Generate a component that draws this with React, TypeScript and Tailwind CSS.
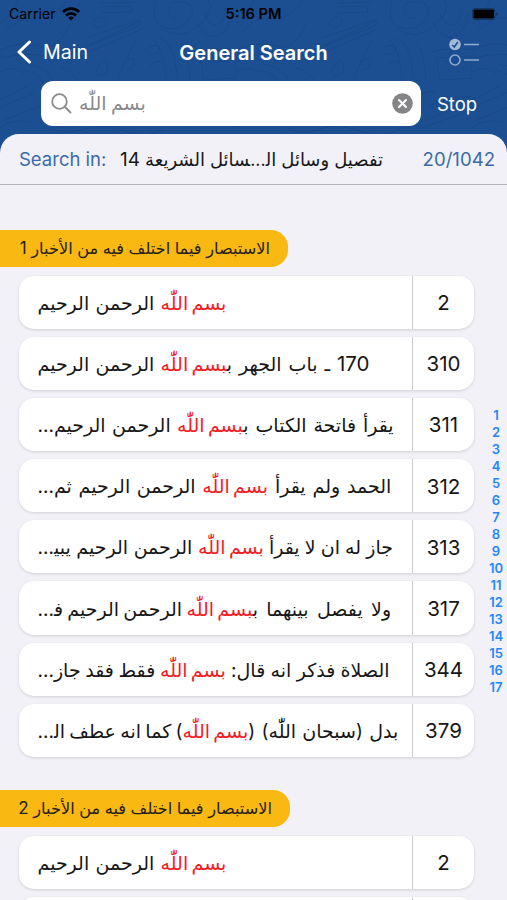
type Row = { page: string; number?: string; before?: string; after: string; beforeGap?: string; afterGap?: string }

const MATCH = "بسم اللّٰه"

const sections: { title: string; number: string; width: string; spacing: string; rows: Row[] }[] = [
  {
    title: "الاستبصار فيما اختلف فيه من الأخبار",
    number: "1",
    width: "w-[288px]",
    spacing: "mt-[45px]",
    rows: [
      { page: "2", after: " الرحمن الرحيم", afterGap: "[word-spacing:1px]" },
      {
        page: "310",
        number: "170",
        before: " ـ باب الجهر ب",
        after: " الرحمن الرحيم",
        beforeGap: "[word-spacing:1.6px]",
        afterGap: "[word-spacing:1px]",
      },
      {
        page: "311",
        before: "يقرأ فاتحة الكتاب ب",
        after: " الرحمن الرحيم...",
        beforeGap: "[word-spacing:1.6px]",
        afterGap: "[word-spacing:1px]",
      },
      {
        page: "312",
        before: "الحمد ولم يقرأ ",
        after: " الرحمن الرحيم ثم...",
        beforeGap: "[word-spacing:1.6px]",
        afterGap: "[word-spacing:1.3px]",
      },
      {
        page: "313",
        before: "جاز له ان لا يقرأ ",
        after: " الرحمن الرحيم يبي‍...",
        beforeGap: "[word-spacing:-0.2px]",
        afterGap: "[word-spacing:0.3px]",
      },
      {
        page: "317",
        before: "ولا يفصل بينهما ب",
        after: " الرحمن الرحيم ف‍...",
        beforeGap: "[word-spacing:3px]",
        afterGap: "[word-spacing:-1px]",
      },
      { page: "344", before: "الصلاة فذكر انه قال: ", after: " فقط فقد جاز...", afterGap: "[word-spacing:-0.7px]" },
      {
        page: "379",
        before: "بدل (سبحان اللّٰه) (",
        after: ") كما انه عطف ال‍...",
        beforeGap: "[word-spacing:1px]",
        afterGap: "[word-spacing:-1px]",
      },
    ],
  },
  {
    title: "الاستبصار فيما اختلف فيه من الأخبار",
    number: "2",
    width: "w-[290px]",
    spacing: "mt-[33px]",
    rows: [{ page: "2", after: " الرحمن الرحيم", afterGap: "[word-spacing:1px]" }],
  },
]

const indexNumbers = Array.from({ length: 17 }, (_, i) => i + 1)

function HeaderPattern() {
  return (
    <svg className="absolute inset-0 h-full w-full" aria-hidden="true">
      <defs>
        <pattern id="doodles" width="236" height="160" patternUnits="userSpaceOnUse">
          <g fill="none" stroke="#123f7a" strokeOpacity="0.45" strokeWidth="1">
            <path d="M0 50q22-10 40-4t30-22M0 58q30-6 44-2M4 34q14-18 32-16t30-16M0 24q12-8 18-24" />
            <path d="M62 58l78-37M66 62l76-33M86 38l52-18q5 2 0 6l-50 20" />
            <path d="M94 20q10-6 12 0t-8 8q-6-2-4-8M103 7l28-1 1 6-32 1M100 3l36-1" />
            <path d="M156 0q-6 24 10 28t24-10-8-16-14 8 10 8M160 28q20 14 38-2t10-26" />
            <path d="M196 22q10 18 22 14t14-24M204 14q6 14 14 10t8-18" />
            <path d="M146 50q8-8 14-2-2 8-12 6M150 66q8-8 12-2M98 66q10-10 10 0t-10 10q-4-4 0-10M126 62q8-8 8 0t-8 8" />
            <path d="M160 38q10 4 14 18l4 24M154 40q10 10 12 38M136 40q-14 26-18 40M180 44q8 4 10 36" />
            <path d="M196 52q20-6 40-2M200 58l36-2v22l-32 2zM208 62l22-1" />
            <path d="M26 64q20 2 28 18M22 70q16 2 22 14M60 68q8 0 18 12M0 72q14-8 24 2" />
            <path d="M0 100l28-14M0 108l36-16M4 120l36-14M0 128q10-10 30-6M190 120l46-18M186 128l50-18M192 106q20-8 44-10" />
            <path d="M50 129q18 6 34 0t40 2 40-2M180 98q10-8 20-6" />
          </g>
        </pattern>
      </defs>
      <rect width="100%" height="100%" fill="url(#doodles)" />
    </svg>
  )
}

function StatusBar() {
  return (
    <div className="relative flex h-7 items-center justify-between px-[9px] text-black">
      <div className="flex flex-1 items-center gap-1.5">
        <span className="text-[14px] leading-none tracking-[0.1px]">Carrier</span>
        <svg width="18" height="14" viewBox="0 0 18 14" fill="none" stroke="currentColor" strokeWidth="2.8">
          <path d="M1 4.9a11.4 11.4 0 0 1 16 0" />
          <path d="M4 8.4a7 7 0 0 1 10 0" />
          <path d="M9 13.4 6.200 10.800a4 4 0 0 1 5.600 0z" fill="currentColor" stroke="none" />
        </svg>
      </div>
      <span className="text-[14.600px] leading-none font-semibold">5:16 PM</span>
      <div className="flex flex-1 justify-end">
        <svg width="26" height="12" viewBox="0 0 26 12">
          <rect x="0.5" y="0.5" width="22.5" height="11" rx="2.5" fill="none" stroke="#000" strokeOpacity="0.3" />
          <rect x="1.500" y="1.500" width="20.5" height="9" rx="1" />
          <path d="M24.3 4v4q1.4-.6 1.4-2T24.3 4z" opacity="0.4" />
        </svg>
      </div>
    </div>
  )
}

function Header() {
  return (
    <header className="relative h-[134px] text-white">
      <StatusBar />
      <div className="relative flex h-12 items-center justify-between pr-7 pl-[17px]">
        <div className="flex flex-1 items-center gap-3">
          <svg width="14" height="24" viewBox="0 0 14 24" fill="none" stroke="currentColor" strokeWidth="3" strokeLinecap="round" strokeLinejoin="round">
            <path d="M12.5 2 2 12l10.500 10" />
          </svg>
          <span className="pt-px text-[19.600px] leading-none">Main</span>
        </div>
        <h1 className="ml-[11px] pt-px text-[20px] leading-none font-semibold">General Search</h1>
        <div className="flex flex-1 justify-end">
          <svg width="30" height="28" viewBox="0 0 30 28" fill="none" stroke="#90a9cd" strokeWidth="1.6">
            <circle cx="6" cy="6.500" r="5.800" fill="#a3b9d8" stroke="none" />
            <path d="M3.300 7 5.300 9 8.800 4" stroke="#1c4f92" />
            <circle cx="6" cy="22" r="5" />
            <path d="M15 6.500h15M15 22h15" />
          </svg>
        </div>
      </div>
      <div className="relative mt-[5px] flex items-center pl-[41px]">
        <div className="flex h-[45px] w-[380px] items-center rounded-[12px] bg-white pr-2 pl-[10px]">
          <svg width="21" height="21" viewBox="0 0 21 21" fill="none" stroke="#8a8a8d" strokeWidth="1.800" strokeLinecap="round">
            <circle cx="8.500" cy="8.500" r="7.300" />
            <path d="m14 14 5.500 5.500" />
          </svg>
          <span dir="rtl" className="ml-[7px] text-[19px] leading-none text-[#8a8a8d] [word-spacing:-1px]">
            {MATCH}
          </span>
          <svg className="ml-auto" width="21" height="21" viewBox="0 0 21 21">
            <circle cx="10.500" cy="10.500" r="10.300" fill="#858588" />
            <path d="m7 7 7 7m0-7-7 7" stroke="#fff" strokeWidth="2" strokeLinecap="round" />
          </svg>
        </div>
        <span className="ml-4 pt-px text-[18.500px] leading-none">Stop</span>
      </div>
    </header>
  )
}

function ResultRow({ row }: { row: Row }) {
  return (
    <div className="flex h-[53.100px] w-[455px] rounded-[15px] bg-white shadow-[0_1px_3px_rgba(0,0,0,0.14)]">
      <div className="flex w-[394px] items-center border-r border-[#c9c9cc] pt-[2px] pl-[18.500px]">
        <p dir="rtl" className="text-[19px] leading-none whitespace-nowrap">
          {row.number && <span className="text-[20.500px]">{row.number}</span>}
          <span className={row.beforeGap}>{row.before}</span>
          <span className="text-[#f21d24] [word-spacing:-2px]">{MATCH}</span>
          <span className={row.afterGap}>{row.after}</span>
        </p>
      </div>
      <span className="flex flex-1 items-center justify-center pt-[2px] text-[20.500px] leading-none">{row.page}</span>
    </div>
  )
}

export default function App() {
  return (
    <div className="relative h-[900px] w-[507px] overflow-hidden bg-[#1c4f92] font-[Inter,'DejaVu_Sans',sans-serif] text-[#161616]">
      <HeaderPattern />
      <Header />
      <main className="relative h-[766px] overflow-hidden rounded-t-[19px] bg-[#f2f1f8]">
        <div className="flex h-[51px] items-center border-b border-[#b5b4ba] pr-3 pl-[19px] text-[18.600px] leading-none text-[#3a6ba8]">
          <span className="w-[88px] text-[18.500px] whitespace-nowrap">Search in:</span>
          <span dir="rtl" className="ml-[13px] text-[18px] whitespace-nowrap text-[#161616]">
            تفصيل وسائل ال‍...‍سائل الشريعة <span className="text-[19px]">14</span>
          </span>
          <span className="ml-auto">20/1042</span>
        </div>
        {sections.map((section) => (
          <section key={section.number} className={section.spacing}>
            <h2
              dir="rtl"
              className={`${section.width} flex h-[37px] items-center rounded-r-[17px] bg-[#f9b812] pr-[18px] text-[#242018]`}
            >
              <span className="text-[16.200px] leading-none font-normal whitespace-nowrap">
                {section.title} <span className="text-[17px]">{section.number}</span>
              </span>
            </h2>
            <div className="mt-[9px] flex flex-col gap-2 pl-[19px]">
              {section.rows.map((row) => (
                <ResultRow key={row.page} row={row} />
              ))}
            </div>
          </section>
        ))}
        {/* Top edge of the next result */}
        <div className="mt-2 ml-[19px] flex h-[53px] w-[455px] rounded-[15px] bg-white shadow-[0_1px_3px_rgba(0,0,0,0.14)]">
          <div className="w-[394px] border-r border-[#c9c9cc]" />
        </div>
        {/* Section index strip */}
        <nav className="absolute top-[273px] right-0 flex w-[22px] flex-col items-center text-[13px] leading-[17px] font-semibold text-[#2486fb]">
          {indexNumbers.map((n) => (
            <span key={n}>{n}</span>
          ))}
        </nav>
      </main>
    </div>
  )
}
